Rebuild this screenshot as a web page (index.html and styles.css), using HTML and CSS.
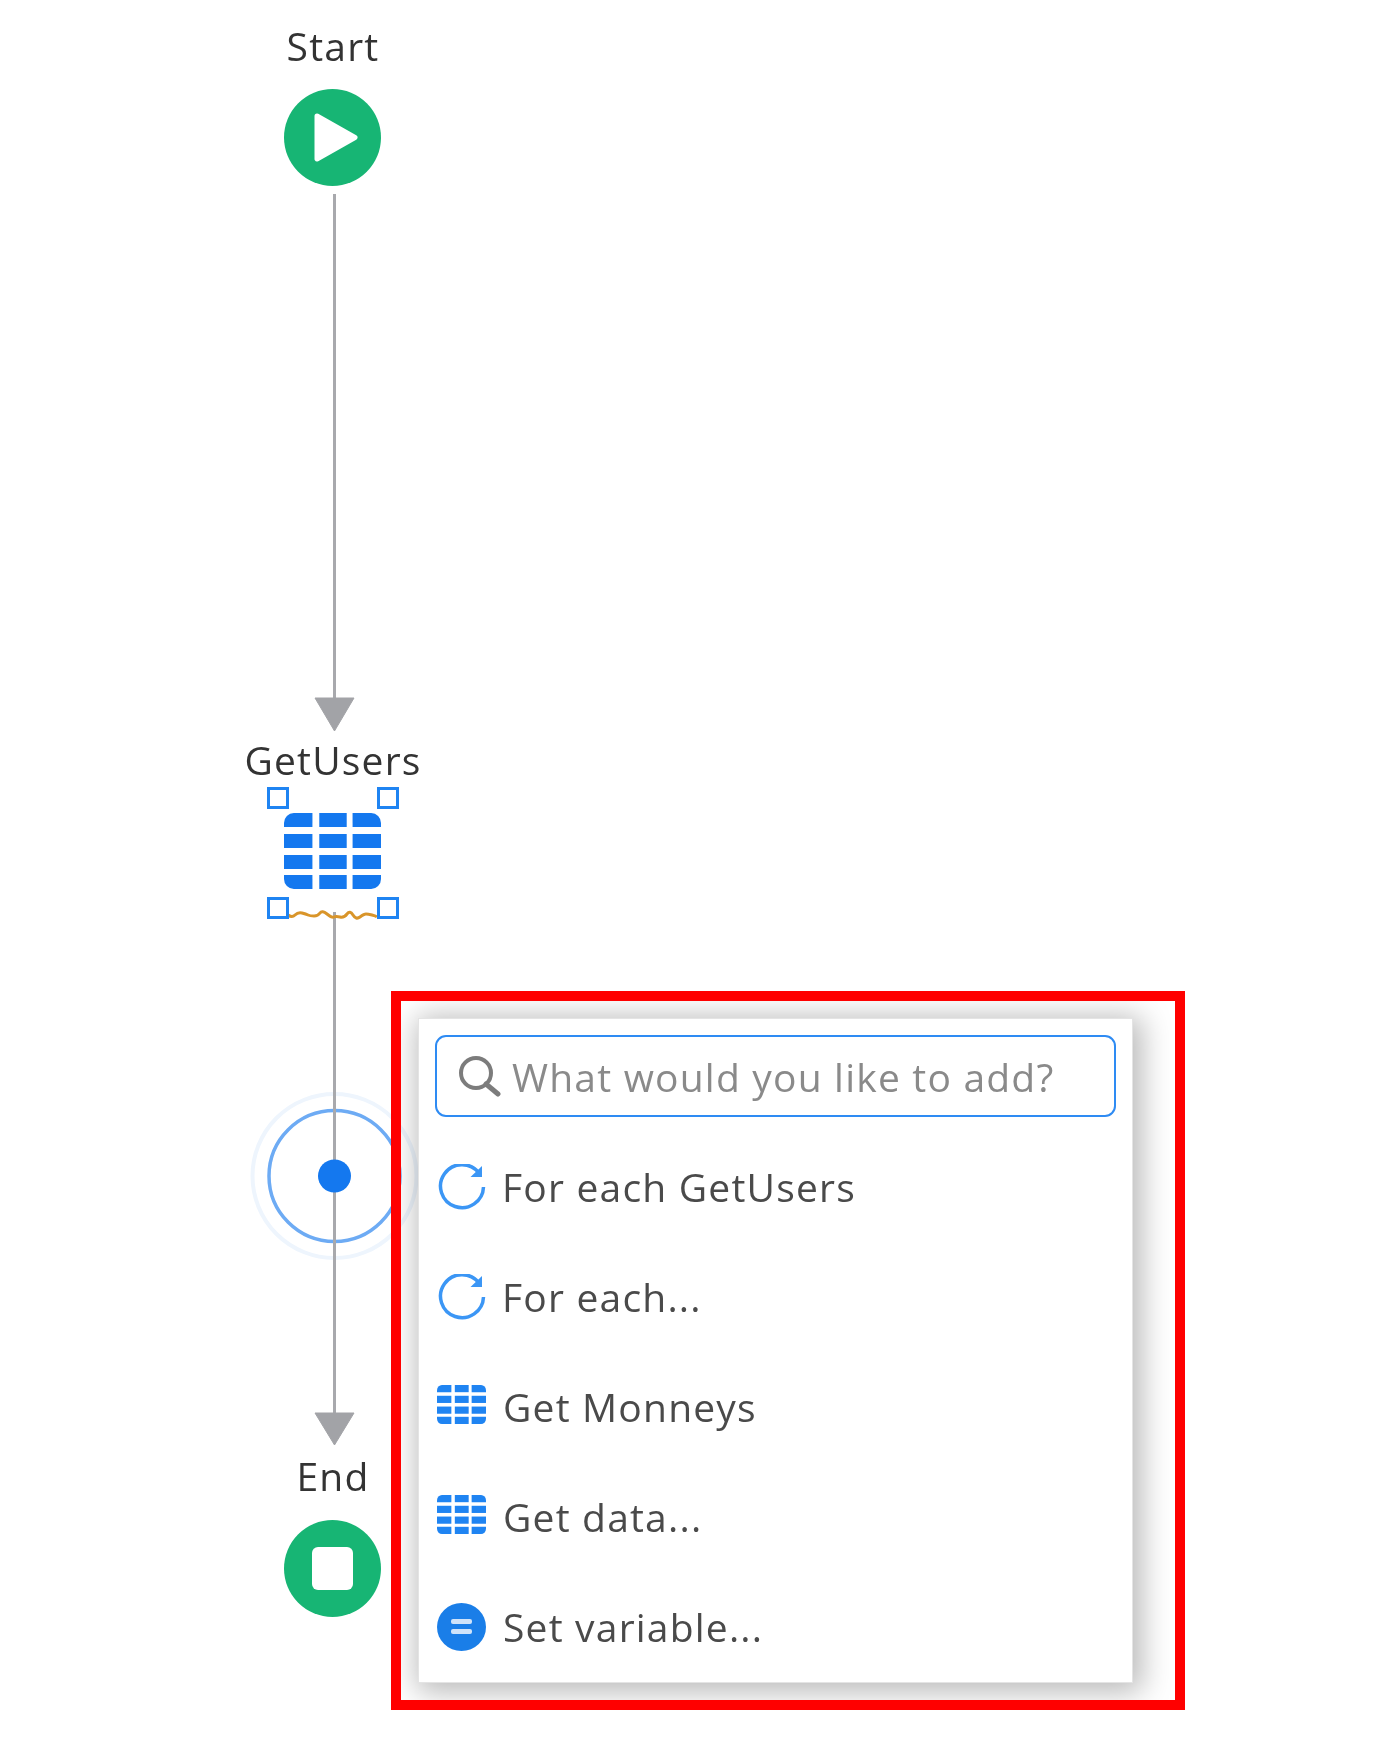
FILE: index.html
```html
<!DOCTYPE html>
<html>
  <head>
    <title>Microflow</title>
    <link rel="stylesheet" href="styles.css">
  </head>
  <body>
    <svg width="0" height="0" class="defs">
      <symbol id="table-icon" viewBox="0 0 99 76" preserveAspectRatio="none">
        <path d="M10 0h19v14H0V10A10 10 0 0 1 10 0z" />
        <rect x="36" y="0" width="28" height="14" />
        <path d="M70 0h19a10 10 0 0 1 10 10v4H70z" />
        <rect x="0" y="21" width="29" height="14" />
        <rect x="36" y="21" width="28" height="14" />
        <rect x="70" y="21" width="29" height="14" />
        <rect x="0" y="42" width="29" height="14" />
        <rect x="36" y="42" width="28" height="14" />
        <rect x="70" y="42" width="29" height="14" />
        <path d="M0 62h29v14H10A10 10 0 0 1 0 66z" />
        <rect x="36" y="62" width="28" height="14" />
        <path d="M70 62h29v4a10 10 0 0 1-10 10H70z" />
      </symbol>
      <symbol id="loop-icon" viewBox="0 0 48 46">
        <path d="M41 9A21.5 21.5 0 1 0 45.500 23" fill="none" stroke="currentColor" stroke-width="3.500" />
        <path d="M44 2v11H32.500z" fill="currentColor" />
      </symbol>
    </svg>

    <div class="canvas">
      <svg class="edges" width="1377" height="1749" viewBox="0 0 1377 1749">
        <circle class="ring-outer" cx="334.500" cy="1176" r="82" />
        <circle class="ring" cx="334.500" cy="1176" r="65.500" />
        <line class="edge" x1="334.500" y1="194" x2="334.500" y2="702" />
        <polygon class="arrow" points="315,698 354,698 334.500,731" />
        <line class="edge" x1="334.500" y1="912" x2="334.500" y2="1418" />
        <polygon class="arrow" points="315,1413 354,1413 334.500,1445" />
        <circle class="dot" cx="334.500" cy="1176" r="16.500" />
        <path class="squiggle" d="M288 915q4 3 7 0t7-2 6 2 6 1 6-3 7 1 7 3 6 0 7-3 6 1 7 2 6-3 6 1 5 2" />
      </svg>

      <div class="node node-start">
        <div class="node-label">Start</div>
        <div class="event">
          <svg width="48" height="52" viewBox="0 0 48 52">
            <path d="M6 4L44 25.500 6 47z" fill="#fff" stroke="#fff" stroke-width="5" stroke-linejoin="round" />
          </svg>
        </div>
      </div>

      <div class="node node-action">
        <div class="node-label">GetUsers</div>
        <div class="selection">
          <span class="handle handle-tl"></span>
          <span class="handle handle-tr"></span>
          <span class="handle handle-bl"></span>
          <span class="handle handle-br"></span>
          <svg class="action-icon" width="97" height="76"><use href="#table-icon" /></svg>
        </div>
      </div>

      <div class="node node-end">
        <div class="node-label">End</div>
        <div class="event">
          <span class="stop"></span>
        </div>
      </div>

      <div class="add-frame">
        <div class="add-panel">
          <div class="search-box">
            <svg class="search-icon" width="44" height="42" viewBox="0 0 44 42">
              <circle cx="19" cy="18" r="15" fill="none" stroke="#7c7c7c" stroke-width="4" />
              <line x1="29" y1="29" x2="41" y2="39" stroke="#7c7c7c" stroke-width="5" stroke-linecap="round" />
            </svg>
            <span class="search-text">What would you like to add?</span>
          </div>

          <div class="add-item">
            <svg class="item-icon loop" width="48" height="46"><use href="#loop-icon" /></svg>
            <span>For each GetUsers</span>
          </div>
          <div class="add-item">
            <svg class="item-icon loop" width="48" height="46"><use href="#loop-icon" /></svg>
            <span>For each...</span>
          </div>
          <div class="add-item">
            <svg class="item-icon grid" width="49" height="39"><use href="#table-icon" /></svg>
            <span>Get Monneys</span>
          </div>
          <div class="add-item">
            <svg class="item-icon grid" width="49" height="39"><use href="#table-icon" /></svg>
            <span>Get data...</span>
          </div>
          <div class="add-item">
            <span class="item-icon variable"><i></i><i></i></span>
            <span>Set variable...</span>
          </div>
        </div>
      </div>
    </div>
  </body>
</html>
```

FILE: styles.css
```css
body {
  margin: 0;
  background-color: #fff;
  font-family: "Open Sans", sans-serif;
  color: #333;
}
.defs {
  position: absolute;
}
.canvas {
  position: relative;
  width: 1377px;
  height: 1749px;
  overflow: hidden;
}
/* the source is an enlarged capture, everything but the red frame is soft */
.edges,
.node,
.add-panel {
  filter: blur(0.7px);
}
.edges {
  position: absolute;
  top: 0;
  left: 0;
}
.edge {
  stroke: #a8a9ad;
  stroke-width: 3;
}
.arrow {
  fill: #a2a3a7;
  stroke: #a2a3a7;
  stroke-width: 1;
  stroke-linejoin: round;
}
.ring {
  fill: none;
  stroke: #6dabf4;
  stroke-width: 3.500;
}
.ring-outer {
  fill: none;
  stroke: #eef5fd;
  stroke-width: 4;
}
.dot {
  fill: #1478ef;
}
.squiggle {
  fill: none;
  stroke: #d9952a;
  stroke-width: 3;
}

.node {
  position: absolute;
  left: 233px;
  width: 200px;
  display: flex;
  flex-direction: column;
  align-items: center;
}
.node-start {
  top: 20px;
}
.node-action {
  top: 734px;
}
.node-end {
  top: 1450px;
}
.node-label {
  font-size: 39px;
  letter-spacing: 1.200px;
  line-height: 52px;
  color: #333;
}
.event {
  width: 97px;
  height: 97px;
  margin-top: 17px;
  margin-right: 2px;
  border-radius: 50%;
  background-color: #17b574;
  display: flex;
  align-items: center;
  justify-content: center;
}
.node-end .event {
  margin-top: 18px;
}
.node-start .event svg {
  margin-left: 5px;
}
.stop {
  width: 41px;
  height: 43px;
  border-radius: 6px;
  background-color: #fff;
}
.selection {
  position: relative;
  width: 132px;
  height: 132px;
  margin-top: 1px;
  display: flex;
  align-items: center;
  justify-content: center;
}
.action-icon {
  fill: #1478ef;
  margin-top: -5px;
  margin-right: 1px;
}
.handle {
  position: absolute;
  width: 16px;
  height: 16px;
  border: 3px solid #1f84f2;
  background-color: #fff;
}
.handle-tl {
  top: 0;
  left: 0;
}
.handle-tr {
  top: 0;
  right: 0;
}
.handle-bl {
  bottom: 0;
  left: 0;
}
.handle-br {
  bottom: 0;
  right: 0;
}

.add-frame {
  position: absolute;
  left: 391px;
  top: 991px;
  width: 794px;
  height: 719px;
  padding: 27px;
  box-sizing: border-box;
  overflow: hidden;
}
.add-frame::after {
  content: "";
  position: absolute;
  top: 0;
  left: 0;
  right: 0;
  bottom: 0;
  border: 10px solid #f00;
}
.add-panel {
  height: 665px;
  width: 715px;
  padding: 17px 17px 0;
  box-sizing: border-box;
  background-color: #fff;
  border: 1px solid #e4e4e4;
  box-shadow: 4px 4px 28px 5px rgba(0, 0, 0, 0.28);
}
.search-box {
  height: 82px;
  margin: -1px -1px 16px;
  padding-left: 20px;
  box-sizing: border-box;
  border: 2px solid #2e8bf3;
  border-radius: 11px;
  display: flex;
  align-items: center;
}
.search-text {
  margin-left: 11px;
  font-size: 39px;
  letter-spacing: 1.200px;
  color: #8a8a8a;
}
.add-item {
  height: 110px;
  margin-left: 2px;
  display: flex;
  align-items: center;
  font-size: 39px;
  letter-spacing: 1.200px;
  color: #4a4a4a;
}
.add-item > span:last-child {
  margin-top: -4px;
}
.item-icon {
  flex: none;
  margin-right: 16px;
}
.loop {
  margin-top: -2px;
  color: #3b96f5;
}
.grid {
  margin-top: -8px;
  margin-left: -1px;
  margin-right: 17px;
  fill: #1f84f2;
}
.variable {
  width: 49px;
  height: 48px;
  margin-top: -3px;
  margin-left: -1px;
  margin-right: 17px;
  border-radius: 50%;
  background-color: #1a7ee8;
  display: flex;
  flex-direction: column;
  align-items: center;
  justify-content: center;
  gap: 5px;
}
.variable i {
  display: block;
  width: 21px;
  height: 5px;
  border-radius: 2px;
  background-color: #cfe3fa;
}
```
